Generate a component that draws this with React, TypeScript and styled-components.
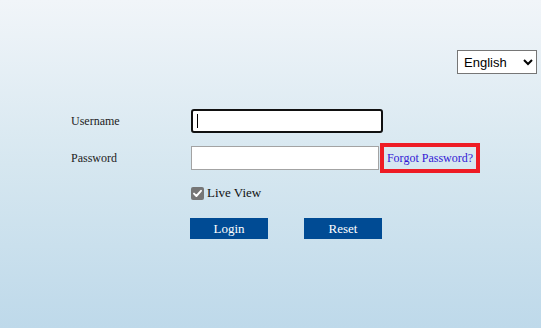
import React from "react";
import styled, { createGlobalStyle } from "styled-components";

const Global = createGlobalStyle`
  html, body { margin: 0; padding: 0; }
  body { font-family: "Liberation Serif", "Times New Roman", serif; }
`;

const Page = styled.div`
  width: 541px;
  height: 328px;
  overflow: hidden;
  background: linear-gradient(to bottom, #f1f5f9 0%, #d6e7f0 50%, #bed9ea 100%);
  display: flex;
  flex-direction: column;
`;

const TopBar = styled.div`
  display: flex;
  justify-content: flex-end;
  padding: 50px 4px 0 0;
`;

const LangSelect = styled.select`
  width: 80px;
  height: 24px;
  font-family: "Liberation Sans", Arial, sans-serif;
  font-size: 13px;
  color: #000;
  background: #fff;
  border: 1px solid #767676;
  border-radius: 0;
  padding: 0 2px;
`;

const Form = styled.div`
  display: grid;
  grid-template-columns: 120px auto;
  align-items: center;
  padding: 35px 0 0 71px;
`;

const Label = styled.span<{ $mt?: number }>`
  font-size: 12px;
  color: #222;
  line-height: 14px;
  margin-top: ${(p) => p.$mt ?? 0}px;
`;

const Field = styled.div<{ $mt?: number }>`
  display: flex;
  align-items: center;
  margin-top: ${(p) => p.$mt ?? 0}px;
`;

const TextInput = styled.input<{ $focused?: boolean; $w: number }>`
  box-sizing: border-box;
  width: ${(p) => p.$w}px;
  height: 24px;
  background: #fff;
  padding: 0 4px;
  font-size: 13px;
  font-family: "Liberation Sans", Arial, sans-serif;
  border: ${(p) => (p.$focused ? "2px solid #111" : "1px solid #a3a3a3")};
  border-radius: ${(p) => (p.$focused ? "3px" : "0")};
  outline: none;
  margin: 0;
`;

const Caret = styled.span`
  position: absolute;
  left: 6px;
  top: 5px;
  width: 1px;
  height: 14px;
  background: #000;
`;

const InputWrap = styled.div`
  position: relative;
  display: flex;
`;

const ForgotBox = styled.a`
  box-sizing: border-box;
  margin-left: 1px;
  width: 100px;
  height: 30px;
  border: 4px solid #ee1c25;
  display: flex;
  align-items: center;
  justify-content: center;
  font-size: 12px;
  color: #3318d4;
  text-decoration: none;
  cursor: pointer;
`;

const CheckRow = styled.label`
  display: flex;
  align-items: center;
  gap: 3px;
  font-size: 13px;
  color: #111;
  margin-top: 12px;
`;

const Box = styled.span`
  width: 13px;
  height: 13px;
  border-radius: 2px;
  background: #767676;
  display: flex;
  align-items: center;
  justify-content: center;
`;

const Buttons = styled.div`
  display: flex;
  gap: 36px;
  margin-top: 17px;
  margin-left: -1px;
`;

const Btn = styled.button`
  width: 78px;
  height: 21px;
  border: none;
  background: #004b94;
  color: #fff;
  font-family: "Liberation Serif", "Times New Roman", serif;
  font-size: 13px;
  padding: 0;
  cursor: pointer;
`;

export default function App() {
  return (
    <>
      <Global />
      <Page>
        <TopBar>
          <LangSelect defaultValue="en">
            <option value="en">English</option>
          </LangSelect>
        </TopBar>
        <Form>
          <Label>Username</Label>
          <Field>
            <InputWrap>
              <TextInput $focused $w={192} type="text" />
              <Caret />
            </InputWrap>
          </Field>
          <Label $mt={9}>Password</Label>
          <Field $mt={10}>
            <TextInput $w={188} type="password" />
            <ForgotBox>Forgot Password?</ForgotBox>
          </Field>
          <span />
          <Field>
            <CheckRow>
              <Box>
                <svg width="11" height="11" viewBox="0 0 11 11">
                  <path d="M2 5.6 L4.4 8 L9 2.8" fill="none" stroke="#fff" strokeWidth="1.9" strokeLinecap="round" strokeLinejoin="round" />
                </svg>
              </Box>
              Live View
            </CheckRow>
          </Field>
          <span />
          <Buttons>
            <Btn>Login</Btn>
            <Btn>Reset</Btn>
          </Buttons>
        </Form>
      </Page>
    </>
  );
}
